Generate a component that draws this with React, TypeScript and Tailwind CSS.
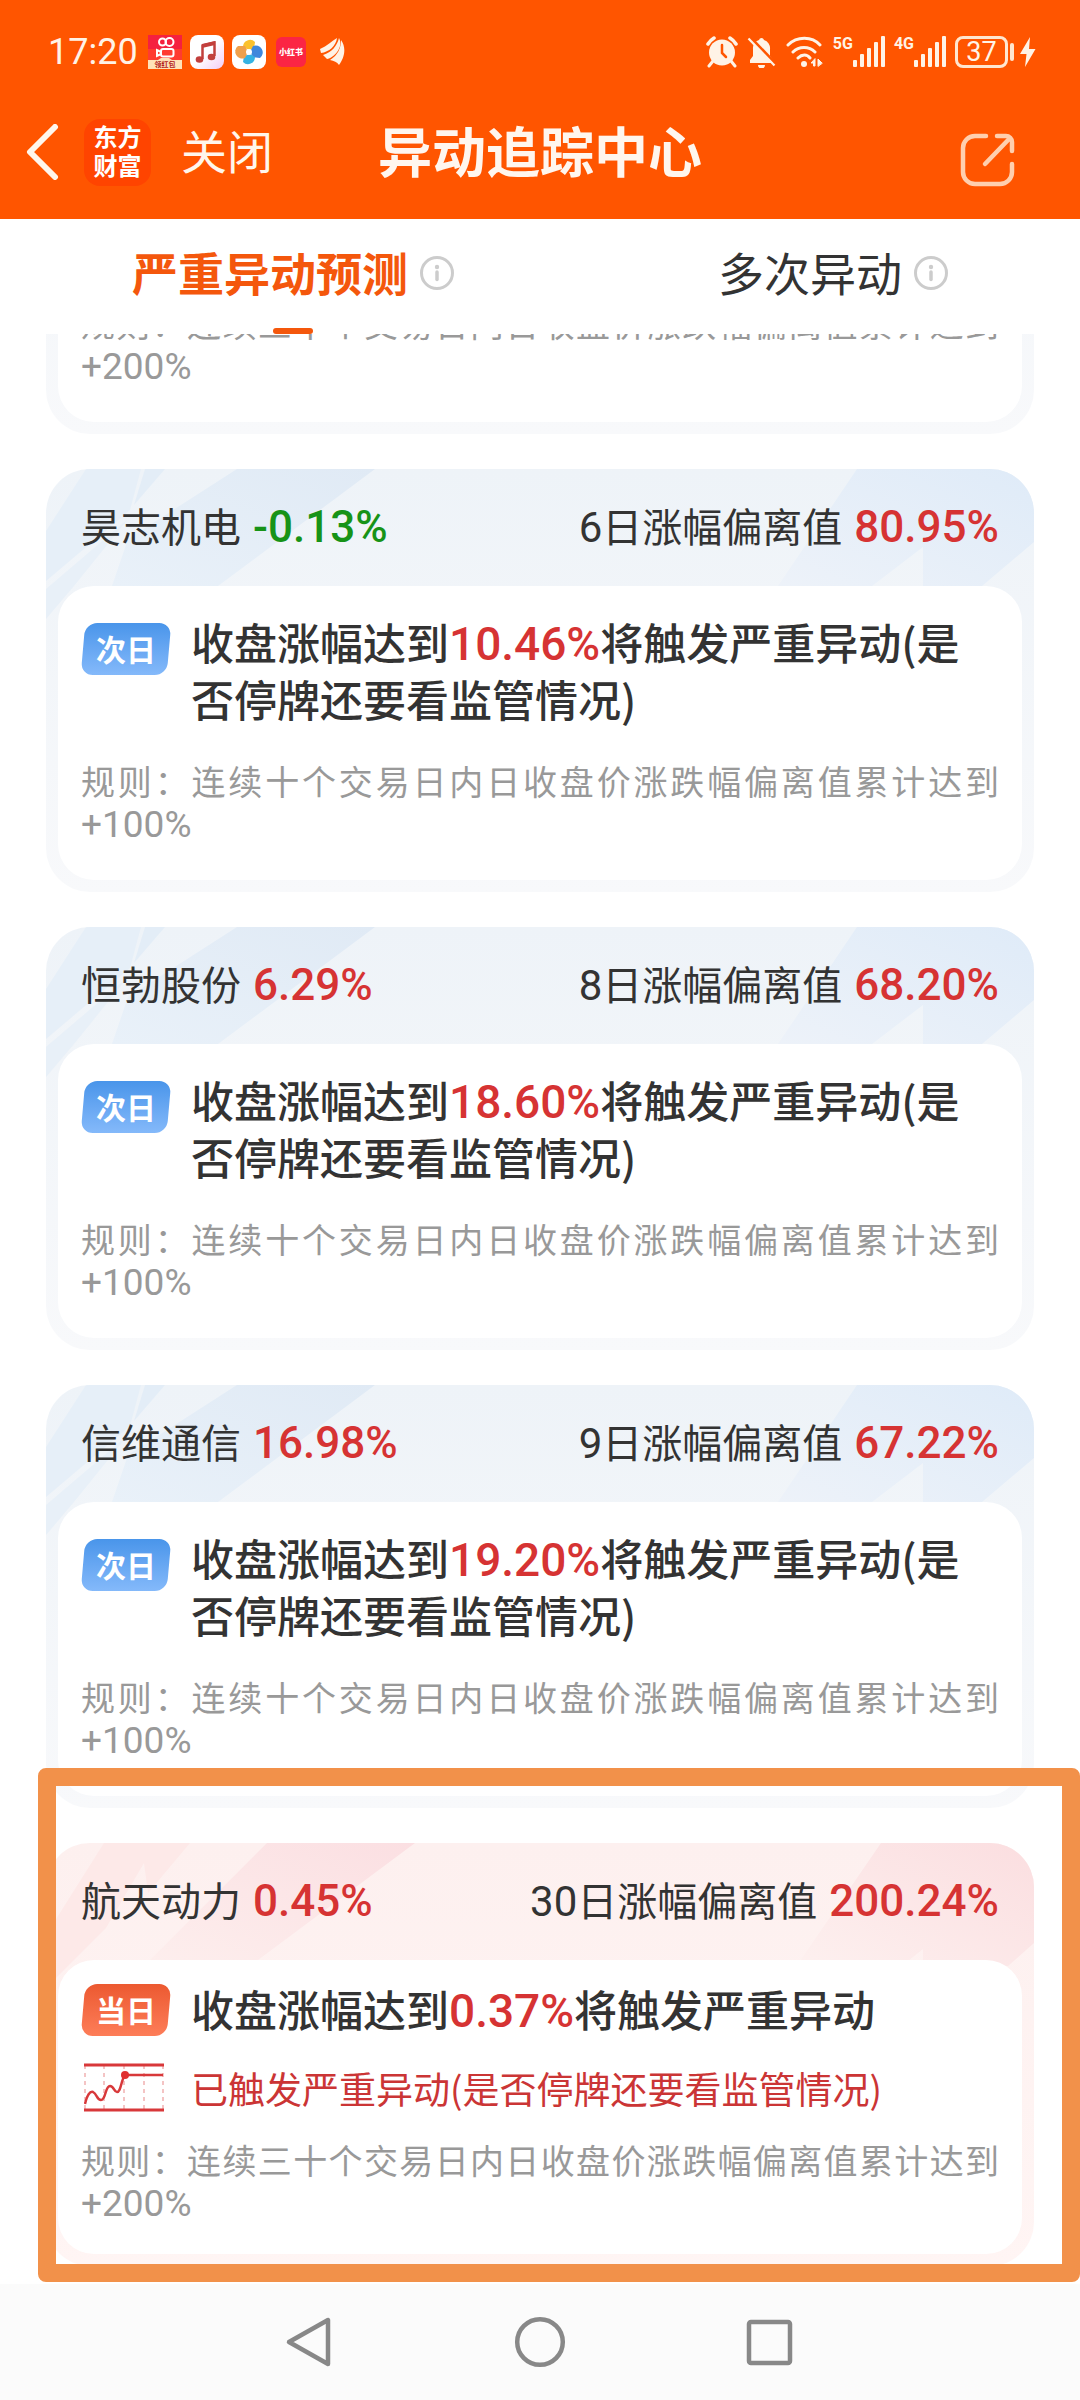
import type { ReactNode } from "react";

type Tone = "blue" | "red";

type Stock = {
  name: string;
  change: string;
  up: boolean;
  days: number;
  deviation: string;
  tone: Tone;
  target: string;
  period: string;
  limit: string;
  triggered?: boolean;
};

const stocks: Stock[] = [
  { name: "航天动力", change: "0.45%", up: true, days: 30, deviation: "200.24%", tone: "blue", target: "0.37%", period: "三十", limit: "+200%" },
  { name: "昊志机电", change: "-0.13%", up: false, days: 6, deviation: "80.95%", tone: "blue", target: "10.46%", period: "十", limit: "+100%" },
  { name: "恒勃股份", change: "6.29%", up: true, days: 8, deviation: "68.20%", tone: "blue", target: "18.60%", period: "十", limit: "+100%" },
  { name: "信维通信", change: "16.98%", up: true, days: 9, deviation: "67.22%", tone: "blue", target: "19.20%", period: "十", limit: "+100%" },
  { name: "航天动力", change: "0.45%", up: true, days: 30, deviation: "200.24%", tone: "red", target: "0.37%", period: "三十", limit: "+200%", triggered: true },
];

function SignalBars({ label }: { label: string }) {
  return (
    <span className="flex items-start">
      <span className="font-[Roboto,sans-serif] text-[16px] leading-4 font-bold">{label}</span>
      <svg width="32" height="32" viewBox="0 0 32 32" fill="currentColor">
        <rect x="0" y="24" width="4" height="7" rx="1" />
        <rect x="7" y="18" width="4" height="13" rx="1" />
        <rect x="14" y="12" width="4" height="19" rx="1" />
        <rect x="21" y="6" width="4" height="25" rx="1" />
        <rect x="28" y="0" width="4" height="31" rx="1" />
      </svg>
    </span>
  );
}

function StatusBar() {
  return (
    <div className="flex h-[104px] items-center justify-between pr-11 pl-12 text-[#fff3e6]">
      <div className="flex items-center gap-2">
        <span className="pr-0.5 font-[Roboto,sans-serif] text-[36px] leading-10">17:20</span>
        <svg width="34" height="34" viewBox="0 0 34 34">
          <rect width="34" height="34" fill="#f5203f" />
          <rect y="14" width="34" height="12" fill="#ff3b30" />
          <g fill="none" stroke="#fff" strokeWidth="2">
            <circle cx="14.500" cy="7" r="3.500" />
            <circle cx="21.500" cy="7" r="4" />
            <rect x="13" y="14" width="12.500" height="7.500" rx="2" />
            <path d="M13 17l-4-2v6l4-2" />
          </g>
          <path d="M0 25h10l3-2h8l3 2h10v9H0z" fill="#ffe3b8" />
          <text x="17" y="32" textAnchor="middle" fontSize="7" fontWeight="700" fill="#b3201a" fontFamily="Noto Sans CJK SC, sans-serif">领红包</text>
        </svg>
        <svg width="34" height="34" viewBox="0 0 34 34">
          <defs>
            <linearGradient id="music" x1="0" y1="0" x2="1" y2="1">
              <stop offset=".5" stopColor="#fff" />
              <stop offset="1" stopColor="#f3cdf5" />
            </linearGradient>
          </defs>
          <rect width="34" height="34" rx="8" fill="url(#music)" />
          <path d="M12.500 24V10.500l12-3V21" fill="none" stroke="#c23f3c" strokeWidth="2.500" />
          <path d="M12 9l13-3v4l-13 3z" fill="#c23f3c" />
          <ellipse cx="9.500" cy="24.500" rx="3.800" ry="3.300" fill="#c23f3c" />
          <ellipse cx="21.500" cy="22" rx="3.800" ry="3.300" fill="#c23f3c" />
        </svg>
        <svg width="34" height="34" viewBox="0 0 34 34">
          <rect width="34" height="34" rx="8" fill="#fff" />
          <path d="M11 12a7 7 0 0 1 12-5l-1 7-5 1z" fill="#fbc12d" />
          <path d="M21 11a7 7 0 0 1 7 12l-7-1-3-5z" fill="#3f87dc" />
          <path d="M23 22a7 7 0 0 1-12 5l1-6 6-2z" fill="#35b3e3" />
          <path d="M13 23a7 7 0 0 1-7-12l7 0 3 6z" fill="#f0a04b" />
          <circle cx="17" cy="17" r="3" fill="#fff" />
        </svg>
        <span className="px-0.5">
          <svg width="30" height="30" viewBox="0 0 30 30">
            <rect width="30" height="30" rx="6" fill="#fb2544" />
            <text x="15" y="18" textAnchor="middle" fontSize="8" fontWeight="900" fill="#fff" fontFamily="Noto Sans CJK SC, sans-serif">小红书</text>
          </svg>
        </span>
        <svg className="ml-1" width="26" height="30" viewBox="0 0 26 30" fill="currentColor">
          <path d="M0 12C7 9 12 4 17 1c-1 8-8 14-16 15z" />
          <path d="M3 18C12 15 17 9 19 1c5 9-5 20-12 21z" />
          <path d="M10 23c8-5 11-12 11-20 6 8 3 19-2 25-2-3-5-4-9-5z" />
        </svg>
      </div>
      <div className="flex items-center gap-[9px]">
        <svg width="32" height="32" viewBox="0 0 32 32" fill="currentColor">
          <circle cx="16" cy="16.500" r="13" />
          <path d="M2 8a18 18 0 0 1 6-6M30 8a18 18 0 0 0-6-6" stroke="currentColor" strokeWidth="3.500" strokeLinecap="round" fill="none" />
          <path d="M7 25l-4 5M25 25l4 5" stroke="currentColor" strokeWidth="3" strokeLinecap="round" />
          <path d="M16 9v8l4 4" fill="none" stroke="#ff5500" strokeWidth="2.500" strokeLinecap="round" />
        </svg>
        <svg width="30" height="32" viewBox="0 0 30 32" fill="currentColor">
          <path d="M3 27v-3l3-4v-7a8.500 8.500 0 0 1 6-9 2.600 2.600 0 0 1 5 0 8.500 8.500 0 0 1 6 9v7l3 4v3z" />
          <path d="M11 29h7a3.500 3.500 0 0 1-7 0z" />
          <path d="M3 1l26 27" stroke="#ff5500" strokeWidth="3" />
          <path d="M1.500 2.500l26 27" stroke="currentColor" strokeWidth="2.200" />
        </svg>
        <svg width="38" height="32" viewBox="0 0 38 32" fill="none" stroke="currentColor" strokeWidth="3" strokeLinecap="round">
          <path d="M2 9c9-9 24-9 32 0M7 16c6-6 16-6 22 0M12 22c4-4 9-4 12 0" />
          <circle cx="18" cy="28" r="3" fill="currentColor" stroke="none" />
          <path d="M29 23v7h-1.500v-3l-2 0zM32 30v-7l4 4z" fill="currentColor" stroke="currentColor" strokeWidth="1" />
        </svg>
        <SignalBars label="5G" />
        <SignalBars label="4G" />
        <span className="flex items-center gap-0.5">
          <span className="flex h-8 w-[53px] items-center justify-center rounded-lg border-[3px] border-[#ffe6cf] font-[Roboto,sans-serif] text-[27px] leading-7">
            37
          </span>
          <span className="h-[18px] w-1 rounded-sm bg-[#ffe6cf]" />
          <svg className="ml-1" width="16" height="30" viewBox="0 0 16 30" fill="currentColor">
            <path d="M10 0L0 17h6.500L5 30l10.500-18H9z" />
          </svg>
        </span>
      </div>
    </div>
  );
}

function Header() {
  return (
    <header className="shrink-0 bg-[#ff5500]">
      <StatusBar />
      <div className="grid h-[115px] grid-cols-[1fr_auto_1fr] px-6 pt-3 pb-[31px]">
        <div className="flex items-center">
          <button type="button" aria-label="返回" className="pr-6">
            <svg width="36" height="56" viewBox="0 0 36 56" fill="none" stroke="#fff6ec" strokeWidth="6" strokeLinecap="round" strokeLinejoin="round">
              <path d="M31 3L6 28l25 25" />
            </svg>
          </button>
          <a href="#home" className="flex size-[67px] flex-col items-center justify-center rounded-2xl bg-[#ff4400] pb-1 text-[24px] leading-[29px] font-bold text-white">
            <span>东方</span>
            <span>财富</span>
          </a>
          <button type="button" className="ml-[30px] pb-1.5 text-[46px] leading-[66px] text-[#fff6ec]">
            关闭
          </button>
        </div>
        <h1 className="pb-1 text-[54px] leading-[68px] font-bold text-[#fff6ee]">异动追踪中心</h1>
        <button type="button" aria-label="分享" className="mr-10 self-end justify-self-end">
          <svg width="56" height="56" viewBox="0 0 56 56" fill="none" stroke="#ffcfae" strokeWidth="4.500" strokeLinecap="round" strokeLinejoin="round">
            <path d="M26 4H15A12 12 0 0 0 3 16v24a12 12 0 0 0 12 12h25a12 12 0 0 0 12-12v-8" />
            <path d="M37 4h9a6 6 0 0 1 6 6v9M50 6L25 32" />
          </svg>
        </button>
      </div>
    </header>
  );
}

function InfoIcon() {
  return (
    <svg width="34" height="34" viewBox="0 0 34 34" fill="none" stroke="#cccccc" strokeWidth="3">
      <circle cx="17" cy="17" r="15.500" />
      <circle cx="17" cy="11" r="2.200" fill="#cccccc" stroke="none" />
      <path d="M17 16v7.500" strokeWidth="3.500" strokeLinecap="round" />
    </svg>
  );
}

function Tabs() {
  return (
    <nav className="flex h-[115px] shrink-0 justify-around bg-white">
      <button type="button" className="flex flex-col items-center justify-end text-[#f4570c]">
        <span className="flex items-center gap-3 pb-[22px]">
          <span className="pb-1 text-[46px] leading-[62px] font-bold">严重异动预测</span>
          <InfoIcon />
        </span>
        <span className="h-1.5 w-10 rounded-full bg-[#f4570c]" />
      </button>
      <button type="button" className="flex items-end pb-7 text-[#333333]">
        <span className="flex items-center gap-3">
          <span className="pb-1 text-[46px] leading-[62px]">多次异动</span>
          <InfoIcon />
        </span>
      </button>
    </nav>
  );
}

function CardRays({ tone }: { tone: Tone }) {
  if (tone === "red") {
    return (
      <>
        <svg className="absolute top-0 left-0" width="380" height="180" viewBox="0 0 380 180">
          <defs>
            <linearGradient id="redLeft" x1="1" y1="0" x2="0" y2="1">
              <stop offset="0" stopColor="#fbdfe2" />
              <stop offset="1" stopColor="#fdeeed" />
            </linearGradient>
          </defs>
          <path d="M58 0h86L102 50 98 20 60 85 0 145V92z" fill="#fde9e8" />
          <path d="M221 0h148L212 117H104z" fill="url(#redLeft)" />
        </svg>
        <svg className="absolute top-0 right-0" width="280" height="180" viewBox="0 0 280 180">
          <defs>
            <linearGradient id="redRight" x1="1" y1="0" x2="0" y2="1">
              <stop offset="0" stopColor="#fbdee0" />
              <stop offset="1" stopColor="#fdf0ef" />
            </linearGradient>
          </defs>
          <path d="M127 0h153v100l-26 23h-85v-17l-15 12H46z" fill="url(#redRight)" />
        </svg>
      </>
    );
  }
  return (
    <>
      <svg className="absolute top-0 left-0" width="380" height="180" viewBox="0 0 380 180">
        <defs>
          <linearGradient id="blueLeft" x1="1" y1="0" x2="0" y2="1">
            <stop offset="0" stopColor="#e0eaf5" />
            <stop offset="1" stopColor="#e9f1f9" />
          </linearGradient>
        </defs>
        <path d="M40 0h55L84 41 0 112V62z" fill="#e6eff8" />
        <path d="M99 0h20L88 36z" fill="#e3edf7" />
        <path d="M82 50L28 117 0 150v-30z" fill="#e8f0f8" />
        <path d="M191 0h138L172 117H66l16-47z" fill="url(#blueLeft)" />
      </svg>
      <svg className="absolute top-0 right-0" width="280" height="180" viewBox="0 0 280 180">
        <defs>
          <linearGradient id="blueRight" x1="1" y1="0" x2="0" y2="1">
            <stop offset="0" stopColor="#dfebf8" />
            <stop offset="1" stopColor="#edf2f9" />
          </linearGradient>
        </defs>
        <path d="M103 0h177v73l-52 44h-59V78l-51 39H24z" fill="url(#blueRight)" />
      </svg>
    </>
  );
}

function DayBadge({ tone }: { tone: Tone }) {
  return (
    <span
      className={
        tone === "red"
          ? "relative isolate mt-1 flex h-[52px] w-[90px] shrink-0 items-center justify-center pb-0.5 text-[30px] leading-10 font-bold text-white before:absolute before:inset-x-0.5 before:inset-y-0 before:-z-10 before:-skew-x-[5deg] before:rounded-xl before:bg-linear-to-b before:from-[#ec5930] before:to-[#fd7d58]"
          : "relative isolate mt-2.5 flex h-[52px] w-[90px] shrink-0 items-center justify-center pb-0.5 text-[30px] leading-10 font-bold text-white before:absolute before:inset-x-0.5 before:inset-y-0 before:-z-10 before:-skew-x-[5deg] before:rounded-xl before:bg-linear-to-b before:from-[#4995ea] before:to-[#84b9fa]"
      }
    >
      {tone === "red" ? "当日" : "次日"}
    </span>
  );
}

function TrendIcon() {
  return (
    <svg className="ml-[3px] shrink-0" width="80" height="50" viewBox="0 0 80 50" fill="none" stroke="#d8383a" strokeWidth="2.500">
      <path d="M1 2v46M20 2v46M40 2v46M60 2v46M79 2v46" stroke="#f0b0b0" strokeWidth="1.500" strokeDasharray="4 4" />
      <path d="M0 2h80M0 47h80" strokeWidth="3" />
      <path d="M1 41C3 32 6 28 9 29c4 2 4 8 8 8 5 0 4-14 9-14 4 0 4 6 7 6 4 0 4-12 8-17h38" />
      <circle cx="41" cy="12" r="4" fill="#e03030" stroke="none" />
    </svg>
  );
}

function StockCard({ stock, children }: { stock: Stock; children?: ReactNode }) {
  const red = stock.tone === "red";
  return (
    <article className="relative">
      <div
        className={
          red
            ? "relative overflow-hidden rounded-[44px] bg-linear-to-b from-[#fdf0ef] to-[#fff5f4] px-3 pb-3"
            : "relative overflow-hidden rounded-[44px] bg-linear-to-b from-[#eef3f8] to-[#f8f9fb] px-3 pb-3"
        }
      >
        <CardRays tone={stock.tone} />
        <div className="relative flex h-[117px] items-center justify-between px-[23px] pb-1.5 text-[40px] leading-[58px] text-[#333333]">
          <div className="flex items-baseline gap-3">
            <h2>{stock.name}</h2>
            <span
              className={
                stock.up
                  ? "font-[Roboto,sans-serif] text-[44px] leading-none font-medium text-[#d63333]"
                  : "font-[Roboto,sans-serif] text-[44px] leading-none font-medium text-[#179317]"
              }
            >
              {stock.change}
            </span>
          </div>
          <div className="flex items-baseline gap-3">
            <p>
              <span className="font-[Roboto,sans-serif] text-[42px] leading-none">{stock.days}</span>日涨幅偏离值
            </p>
            <span className="font-[Roboto,sans-serif] text-[44px] leading-none font-medium text-[#d63333]">{stock.deviation}</span>
          </div>
        </div>
        <div className={red ? "relative rounded-[36px] bg-white px-[23px] pt-5 pb-[31px]" : "relative rounded-[36px] bg-white px-[23px] pt-[27px] pb-9"}>
          <div className="flex items-start gap-5">
            <DayBadge tone={stock.tone} />
            <p className="pr-5 text-[43px] leading-[57px] font-medium text-[#333333]">
              收盘涨幅达到
              <span className="font-[Roboto,sans-serif] text-[46px] leading-none text-[#d63333]">{stock.target}</span>
              将触发严重异动{red ? "" : "(是否停牌还要看监管情况)"}
            </p>
          </div>
          {stock.triggered && (
            <div className="mt-[22px] flex items-center gap-[27px]">
              <TrendIcon />
              <p className="text-[37px] leading-[58px] text-[#cb3535]">已触发严重异动(是否停牌还要看监管情况)</p>
            </div>
          )}
          <p className={red ? "mt-[22px] text-justify text-[34px] leading-[42px] text-[#999999]" : "mt-[33px] text-justify text-[34px] leading-[42px] text-[#999999]"}>
            规则：连续{stock.period}个交易日内日收盘价涨跌幅偏离值累计达到
            <span className="font-[Roboto,sans-serif] text-[37px] leading-none">{stock.limit}</span>
          </p>
        </div>
      </div>
      {children}
    </article>
  );
}

function SystemNav() {
  return (
    <footer className="flex h-[116px] shrink-0 items-center justify-center gap-[180px] bg-[#fbfbfb]">
      <button type="button" aria-label="后退">
        <svg width="50" height="52" viewBox="0 0 50 52" fill="none" stroke="#888888" strokeWidth="4.500" strokeLinejoin="round">
          <path d="M44 4v44L5 26z" />
        </svg>
      </button>
      <button type="button" aria-label="主屏幕">
        <svg width="52" height="52" viewBox="0 0 52 52" fill="none" stroke="#888888" strokeWidth="4.500">
          <circle cx="26" cy="26" r="22.800" />
        </svg>
      </button>
      <button type="button" aria-label="最近任务">
        <svg width="50" height="52" viewBox="0 0 50 52" fill="none" stroke="#888888" strokeWidth="4.500">
          <rect x="3" y="6" width="41" height="41" rx="2" />
        </svg>
      </button>
    </footer>
  );
}

export default function App() {
  return (
    <div className="flex h-screen flex-col bg-white font-['Noto_Sans_CJK_SC',sans-serif]">
      <Header />
      <Tabs />
      {/* column-reverse keeps the list scrolled to its newest entry */}
      <main className="flex min-h-0 flex-1 flex-col-reverse overflow-x-hidden overflow-y-auto [scrollbar-width:none]">
        <div className="flex flex-col gap-[35px] px-[46px] pb-[18px]">
          {stocks.map((stock, i) => (
            <StockCard key={i} stock={stock}>
              {stock.triggered && (
                <div className="pointer-events-none absolute -top-[75px] -right-[46px] -bottom-4 -left-2 rounded-lg border-[18px] border-[#f2914a]" />
              )}
            </StockCard>
          ))}
        </div>
      </main>
      <SystemNav />
    </div>
  );
}
